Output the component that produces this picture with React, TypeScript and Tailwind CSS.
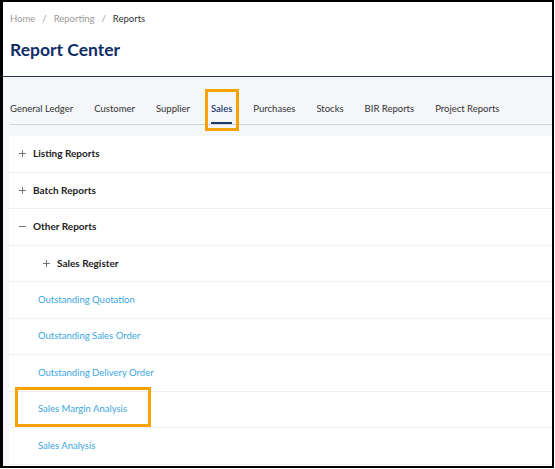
import React from 'react';

const tabs = ['General Ledger', 'Customer', 'Supplier', 'Sales', 'Purchases', 'Stocks', 'BIR Reports', 'Project Reports'];

const Toggle: React.FC<{ open?: boolean }> = ({ open }) => (
    <svg width="9" height="9" viewBox="0 0 9 9" className="shrink-0">
        <path d="M1 4.5H8" stroke="#666" strokeWidth="0.9" />
        {!open && <path d="M4.5 1V8" stroke="#666" strokeWidth="0.9" />}
    </svg>
);

const GroupRow: React.FC<{ label: string; open?: boolean; indent?: boolean }> = ({ label, open, indent }) => (
    <div className={`h-[36.5px] border-b border-[#f0f0f2] flex items-center gap-[6px] ${indent ? 'pl-[33px]' : 'pl-[9px]'}`}>
        <Toggle open={open} />
        <span className="text-[10px] font-bold text-[#222]">{label}</span>
    </div>
);

const LinkRow: React.FC<{ label: string; highlight?: boolean }> = ({ label, highlight }) => (
    <div className="relative h-[36.5px] border-b border-[#f0f0f2] flex items-center pl-[29px]">
        <span className="text-[9.5px] text-[#3aa6e2]">{label}</span>
        {highlight && (
            <div className="absolute left-[6px] top-[-5px] w-[136px] h-[40px] border-[3px] border-[#f7a400]" />
        )}
    </div>
);

export default function App() {
    return (
        <div className="w-[554px] h-[468px] border-2 border-l-[3px] border-black bg-[#f4f6fa] flex flex-col overflow-hidden" style={{ fontFamily: 'Lato, "Noto Sans", sans-serif' }}>
            <div className="bg-white h-[75px] pl-[7px] pt-[10px] border-b border-[#2a3445]">
                <div className="flex items-center gap-[7px] text-[9.5px]">
                    <span className="text-[#9a9a9a]">Home</span>
                    <span className="text-[#9a9a9a]">/</span>
                    <span className="text-[#9a9a9a]">Reporting</span>
                    <span className="text-[#9a9a9a]">/</span>
                    <span className="text-[#333]">Reports</span>
                </div>
                <h1 className="mt-[15px] text-[17.5px] font-bold text-[#0f2d66] leading-none">Report Center</h1>
            </div>

            <div className="pl-[7px] pt-[25px]">
                <div className="flex gap-[21px] border-b border-[#cfd2d8] h-[23px]">
                    {tabs.map((t) => {
                        const active = t === 'Sales';
                        return (
                            <div key={t} className="relative flex flex-col items-center">
                                <span className={`text-[9.5px] leading-[14px] ${active ? 'text-[#1e3a6e] font-semibold' : 'text-[#333]'}`}>{t}</span>
                                {active && (
                                    <>
                                        <div className="absolute bottom-[0px] left-0 right-0 h-[2px] bg-[#1e3a6e]" />
                                        <div className="absolute left-[-6px] top-[-13px] w-[34px] h-[42px] border-[3px] border-[#f7a400]" />
                                    </>
                                )}
                            </div>
                        );
                    })}
                </div>
            </div>

            <div className="mt-[11px] ml-[6px] bg-white flex-1">
                <GroupRow label="Listing Reports" />
                <GroupRow label="Batch Reports" />
                <GroupRow label="Other Reports" open />
                <GroupRow label="Sales Register" indent />
                <LinkRow label="Outstanding Quotation" />
                <LinkRow label="Outstanding Sales Order" />
                <LinkRow label="Outstanding Delivery Order" />
                <LinkRow label="Sales Margin Analysis" highlight />
                <LinkRow label="Sales Analysis" />
            </div>
        </div>
    );
}
